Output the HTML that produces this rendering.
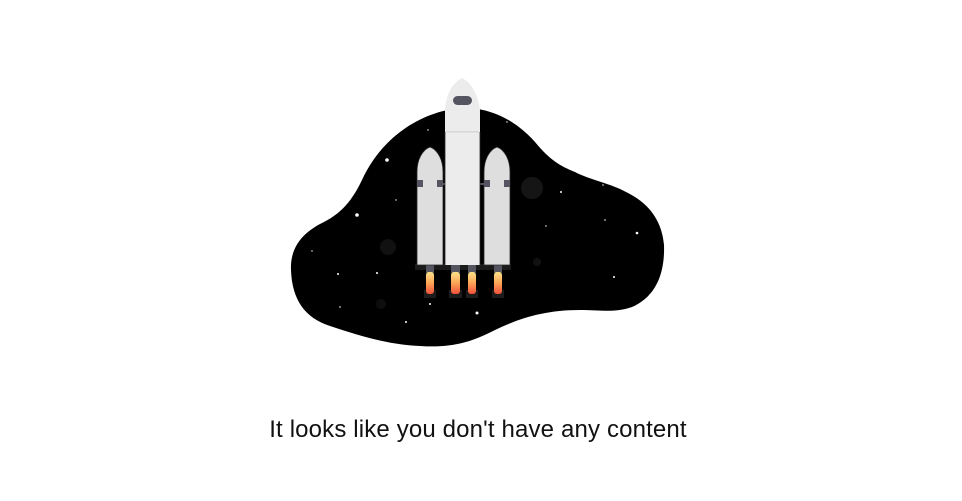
<!DOCTYPE html>
<html><head><meta charset="utf-8"><style>
html,body{margin:0;padding:0;background:#fff;width:962px;height:501px;overflow:hidden}
svg{position:absolute;left:0;top:0}
.t{position:absolute;left:0;width:956px;top:416px;text-align:center;font-family:"Liberation Sans",sans-serif;font-size:24px;letter-spacing:0.15px;color:#111}
</style></head><body>
<svg width="962" height="501" viewBox="0 0 962 501">
<defs>
<linearGradient id="f" x1="0" y1="0" x2="0" y2="1"><stop offset="0" stop-color="#fce28a"/><stop offset="0.5" stop-color="#fba556"/><stop offset="1" stop-color="#f2503a"/></linearGradient>
</defs>
<path d="M462 108 C430 110 385 130 362 180 C350 205 338 215 322 223 C300 234 290 250 291 270 C292 300 305 318 330 326 C360 336 390 345 420 346 C450 348 470 343 495 330 C520 318 545 310 580 310 C600 310 615 313 632 307 C655 297 665 275 664 245 C662 220 648 203 628 193 C610 183 590 180 575 172 C560 166 550 160 535 142 C520 125 495 107 462 108 Z" fill="#000"/>
<g fill="#fff">
<circle cx="387" cy="160" r="1.8"/><circle cx="357" cy="215" r="1.8"/><circle cx="477" cy="313" r="1.5"/><circle cx="637" cy="233" r="1.3"/><circle cx="561" cy="192" r="1"/><circle cx="614" cy="277" r="1"/><circle cx="605" cy="220" r="0.8"/><circle cx="406" cy="322" r="1"/><circle cx="340" cy="307" r="0.8"/><circle cx="312" cy="251" r="0.7"/><circle cx="396" cy="200" r="0.7"/><circle cx="546" cy="226" r="0.7"/><circle cx="603" cy="185" r="0.7"/><circle cx="428" cy="130" r="0.7"/><circle cx="507" cy="122" r="0.7"/>
<circle cx="338" cy="274" r="1"/><circle cx="377" cy="273" r="1"/><circle cx="430" cy="304" r="1"/>
</g>
<circle cx="532" cy="188" r="11" fill="#151515"/><circle cx="388" cy="247" r="8" fill="#111"/><circle cx="537" cy="262" r="4" fill="#111"/><circle cx="381" cy="304" r="5" fill="#0e0e0e"/>
<rect x="415" y="264" width="96" height="6" fill="#1a1a1a"/>
<g fill="#555562"><rect x="426" y="265" width="8" height="8"/><rect x="451" y="265" width="9" height="8"/><rect x="468" y="265" width="8" height="8"/><rect x="494" y="265" width="8" height="8"/></g>
<g fill="#1c1c1c"><rect x="424" y="290" width="12" height="8"/><rect x="449" y="290" width="13" height="8"/><rect x="466" y="290" width="12" height="8"/><rect x="492" y="290" width="12" height="8"/></g>
<g fill="url(#f)"><rect x="426" y="272" width="8" height="22" rx="3"/><rect x="451" y="272" width="9" height="22" rx="3"/><rect x="468" y="272" width="8" height="22" rx="3"/><rect x="494" y="272" width="8" height="22" rx="3"/></g>
<path d="M417 265 L417 172 C417 160 422 150 430 147 C438 150 443 160 443 172 L443 265 Z" fill="#dedede" stroke="#2a2a2a" stroke-width="0.8"/>
<path d="M484 265 L484 172 C484 160 489 150 497 147 C505 150 510 160 510 172 L510 265 Z" fill="#dedede" stroke="#2a2a2a" stroke-width="0.8"/>
<rect x="440" y="183" width="46" height="2" fill="#555562"/>
<g fill="#555562"><rect x="417" y="180" width="6" height="7"/><rect x="437" y="180" width="6" height="7"/><rect x="484" y="180" width="6" height="7"/><rect x="504" y="180" width="6" height="7"/></g>
<path d="M445 265 L445 110 C446 95 452 83 462 78 C472 83 478 95 480 110 L480 265 Z" fill="#ececec"/>
<path d="M445 132 L445 265 M480 132 L480 265" stroke="#2a2a2a" stroke-width="0.8"/>
<rect x="446" y="131" width="33" height="1.5" fill="#d6d6d6"/>
<rect x="453" y="96" width="19" height="9" rx="4.5" fill="#555562"/>
</svg>
<div class="t">It looks like you don't have any content</div>
</body></html>
